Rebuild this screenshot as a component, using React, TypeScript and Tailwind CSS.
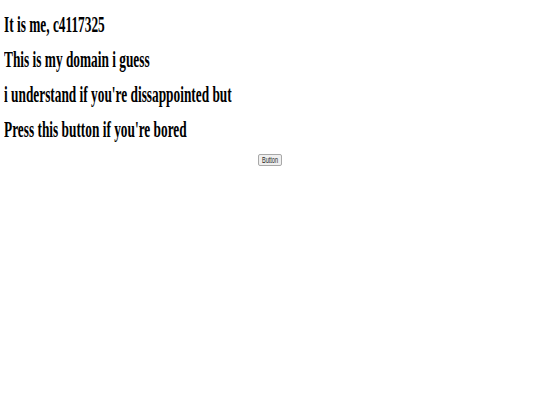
export default function App() {
  const lines = [
    "It is me, c4117325",
    "This is my domain i guess",
    "i understand if you're dissappointed but",
    "Press this button if you're bored",
  ];

  return (
    <div className="w-[540px] h-[405px] bg-white text-black font-['Liberation_Serif',serif] pt-[7px]">
      {lines.map((line) => (
        <div key={line} className="px-[4px] h-[35px] leading-[35px] text-[23px] font-bold whitespace-nowrap">
          <span className="inline-block origin-left scale-x-[0.58]">{line}</span>
        </div>
      ))}
      <div className="flex justify-center mt-[7px]">
        <button className="w-[24px] h-[12px] flex items-center justify-center bg-[#efefef] border border-[#a8a8a8] rounded-[2px] text-[#222] font-['Liberation_Sans',sans-serif] text-[9px] leading-none overflow-hidden">
          <span className="inline-block scale-x-[0.62]">Button</span>
        </button>
      </div>
    </div>
  );
}
